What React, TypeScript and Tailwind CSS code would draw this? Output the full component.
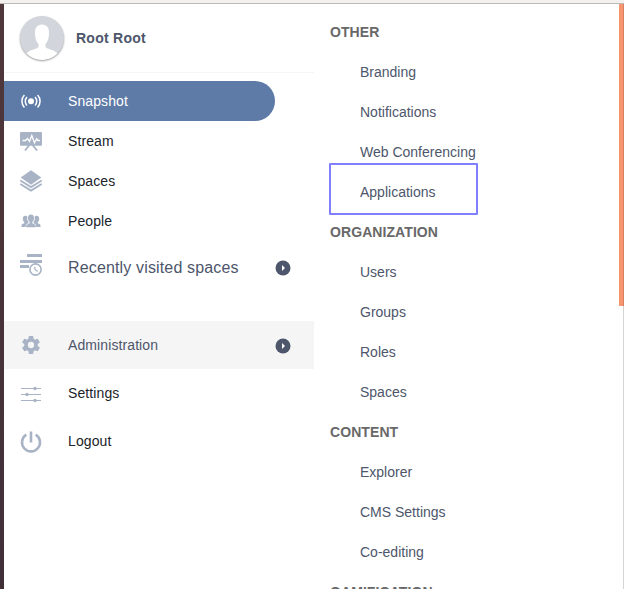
import React from "react";

const groups = [
  { title: "OTHER", items: ["Branding", "Notifications", "Web Conferencing", "Applications"] },
  { title: "ORGANIZATION", items: ["Users", "Groups", "Roles", "Spaces"] },
  { title: "CONTENT", items: ["Explorer", "CMS Settings", "Co-editing"] },
  { title: "GAMIFICATION", items: [] },
];

function Icon({ children, className = "" }: { children: React.ReactNode; className?: string }) {
  return (
    <svg viewBox="0 0 24 24" className={`h-6 w-6 shrink-0 ${className || "text-[#a8b3c5]"}`} fill="currentColor">
      {children}
    </svg>
  );
}

const stroke = { fill: "none", stroke: "currentColor" };

const SnapshotIcon = () => (
  <Icon className="text-white">
    <circle cx="12" cy="12.2" r="3" />
    <g {...stroke} strokeWidth="1.5">
      <path d="M8 8a6 6 0 0 0 0 8.400M16 8a6 6 0 0 1 0 8.400M5.400 6a9 9 0 0 0 0 12.400M18.600 6a9 9 0 0 1 0 12.400" />
    </g>
  </Icon>
);

const StreamIcon = () => (
  <Icon>
    <rect x="1" y="3" width="22" height="13.700" rx="1" />
    <path d="M3.500 11.500h3l2-2 2 2.800L12.800 6.500l2.700 7.300 2.300-4 1.200 1.700H21" fill="none" stroke="white" strokeWidth="1.300" />
    <path d="m10.500 16-4.500 5.500M13.500 16l4.500 5.500" {...stroke} strokeWidth="1.900" />
  </Icon>
);

const SpacesIcon = () => (
  <Icon>
    <path d="M12 1.300 22.300 8.500 12 15.700 1.700 8.500Z" />
    <path d="m1.300 11.600 10.700 6.500 10.700-6.500M1.300 15.100 12 21.600l10.700-6.500" {...stroke} strokeWidth="1.800" />
  </Icon>
);

const PeopleIcon = () => (
  <Icon>
    <path d="M2.500 18v-1.800c0-1 1.800-1.400 2.800-1.900v-1c-1-.900-1.500-2-1.500-3.500 0-2 1-3 2.500-3 1 0 1.800.400 2.200 1.200-.800 2 .100 4 1 5l-.200 1.300C7.500 15 6.800 16 6.600 18ZM21.500 18v-1.800c0-1-1.800-1.400-2.800-1.900v-1c1-.900 1.500-2 1.500-3.500 0-2-1-3-2.500-3-1 0-1.800.400-2.200 1.200.800 2-.100 4-1 5l.200 1.300c1.800.700 2.500 1.700 2.700 3.700Z" />
    <path d="M7.200 18.300v-1.200c0-1.500 2-2 3.500-2.800v-1.200C9.500 12 9 10.800 9 9c0-2.400 1.200-3.500 3-3.500S15 6.600 15 9c0 1.800-.500 3-1.700 4.100v1.200c1.500.800 3.500 1.300 3.500 2.800v1.200Z" />
  </Icon>
);

const RecentIcon = () => (
  <Icon>
    <path d="M8 1h15v3H8ZM1 7h22v3H1ZM1 12h9v3H1Z" />
    <circle cx="16.500" cy="16.500" r="5.600" fill="white" stroke="currentColor" strokeWidth="1.600" />
    <path d="m15.800 13.700.200 2.800 2.700 2" {...stroke} strokeWidth="1.200" />
  </Icon>
);

const GearIcon = () => (
  <Icon>
    <path d="M19.430 12.980c.040-.320.070-.640.070-.980s-.030-.660-.070-.980l2.110-1.650c.190-.150.240-.420.120-.640l-2-3.460c-.120-.220-.390-.300-.610-.220l-2.490 1c-.520-.400-1.080-.730-1.690-.980l-.380-2.650C14.460 2.180 14.250 2 14 2h-4c-.250 0-.460.180-.490.420l-.380 2.650c-.610.250-1.170.590-1.690.980l-2.490-1c-.230-.090-.490 0-.610.220l-2 3.460c-.130.220-.070.490.120.640l2.110 1.650c-.040.320-.070.650-.070.980s.030.660.070.980l-2.110 1.650c-.190.150-.240.420-.120.640l2 3.460c.120.220.390.300.610.220l2.490-1c.520.400 1.080.730 1.690.980l.380 2.650c.030.240.240.420.490.420h4c.250 0 .460-.180.490-.420l.380-2.650c.610-.250 1.170-.590 1.690-.980l2.490 1c.230.090.490 0 .610-.220l2-3.460c.120-.220.070-.490-.120-.640ZM12 15.500a3.500 3.500 0 1 1 0-7 3.500 3.500 0 0 1 0 7Z" transform="translate(1.200 1.200) scale(.9)" fillRule="evenodd" />
  </Icon>
);

const SettingsIcon = () => (
  <Icon>
    <path d="M2 6.500h20M2 12.500h20M2 18.500h20" {...stroke} strokeWidth="1.200" />
    <circle cx="16" cy="6.500" r="1.700" />
    <circle cx="8" cy="12.500" r="1.700" />
    <circle cx="16" cy="18.500" r="1.700" />
  </Icon>
);

const LogoutIcon = () => (
  <Icon>
    <path d="M7.300 4.700a9 9 0 1 0 9.400 0M12 1.500v11" {...stroke} strokeWidth="2.600" />
  </Icon>
);

function ArrowCircle() {
  return (
    <svg viewBox="0 0 16 16" className="mr-[23px] ml-auto h-4 w-4 shrink-0">
      <circle cx="8" cy="8" r="7.500" fill="#4d566b" />
      <path d="m7 5 3 3-3 3Z" fill="white" />
    </svg>
  );
}

function NavRow({ icon, label, className }: { icon: React.ReactNode; label: string; className: string }) {
  return (
    <a className={`flex items-center pl-[15px] text-sm tracking-[0.1px] ${className}`}>
      {icon}
      <span className="ml-[25px]">{label}</span>
    </a>
  );
}

function Avatar() {
  return (
    <svg viewBox="0 0 44 44" className="h-11 w-11 rounded-full bg-[#d2d6dc] shadow-[0_1px_2px_rgba(0,0,0,0.4)]">
      <path d="M22 8.500c-5 0-7.300 3.500-7 9 .200 5 1.200 8 3.500 10.500v3c-1.500 2.500-9 2.500-12 6.500C10.500 42 16 44 22 44s11.500-2 15.500-6.500c-3-4-10.500-4-12-6.500v-3c2.300-2.500 3.300-5.500 3.500-10.500.300-5.500-2-9-7-9Z" fill="white" />
    </svg>
  );
}

export default function App() {
  return (
    <div className="flex h-[589px] w-[624px] flex-col overflow-hidden bg-white font-['Liberation_Sans',sans-serif]">
      <div className="h-1 shrink-0 border-b border-[#bdb9b5] bg-[#f2f1f0]" />
      <div className="flex min-h-0 flex-1">
        <div className="w-1 shrink-0 bg-gradient-to-b from-[#50373b] to-[#412f38]" />
        <nav className="w-[310px] shrink-0 text-[#20242b]">
          <header className="flex h-[69px] items-center border-b border-[#f5f5f5] pl-4">
            <Avatar />
            <span className="ml-3 text-sm font-bold tracking-[0.25px] text-[#4d566b]">Root Root</span>
          </header>
          <div className="pt-2">
            <NavRow icon={<SnapshotIcon />} label="Snapshot" className="h-10 w-[271px] rounded-r-full bg-[#5e7ba8] text-white" />
            <NavRow icon={<StreamIcon />} label="Stream" className="h-10" />
            <NavRow icon={<SpacesIcon />} label="Spaces" className="h-10" />
            <NavRow icon={<PeopleIcon />} label="People" className="h-10" />
            <div className="flex h-14 items-center pl-[15px] text-[#4d566b]">
              <div className="-mt-2"><RecentIcon /></div>
              <span className="-mt-[3px] ml-[25px] text-base tracking-[0.15px]">Recently visited spaces</span>
              <div className="-mt-0.5 ml-auto"><ArrowCircle /></div>
            </div>
          </div>
          <div className="mt-6 flex h-12 items-center bg-[#f5f5f5] pl-[15px] text-sm text-[#4d566b]">
            <GearIcon />
            <span className="ml-[25px] tracking-[0.1px]">Administration</span>
            <div className="mt-0.5 ml-auto"><ArrowCircle /></div>
          </div>
          <NavRow icon={<div className="mt-0.5"><SettingsIcon /></div>} label="Settings" className="h-12" />
          <NavRow icon={<div className="mt-0.5"><LogoutIcon /></div>} label="Logout" className="h-12" />
        </nav>
        <main className="min-w-0 flex-1 pt-2 pl-4 text-sm text-[#4d566b]">
          {groups.map((group) => (
            <section key={group.title}>
              <h2 className="flex h-10 items-center font-bold tracking-[0.08px] text-[#686868]">{group.title}</h2>
              {group.items.map((item) => (
                <div key={item} className="relative flex h-10 items-center pl-[30px]">
                  {item === "Applications" && (
                    <div className="absolute -top-[9px] -left-px h-[52px] w-[149px] rounded-[1px] border-2 border-[#8080ff]" />
                  )}
                  {item}
                </div>
              ))}
            </section>
          ))}
        </main>
        <div className="w-[5px] shrink-0 border-r border-[#d5d5d5]">
          <div className="-mr-px h-[302px] border-r border-[#d98060] bg-[#f59670]" />
        </div>
      </div>
    </div>
  );
}
